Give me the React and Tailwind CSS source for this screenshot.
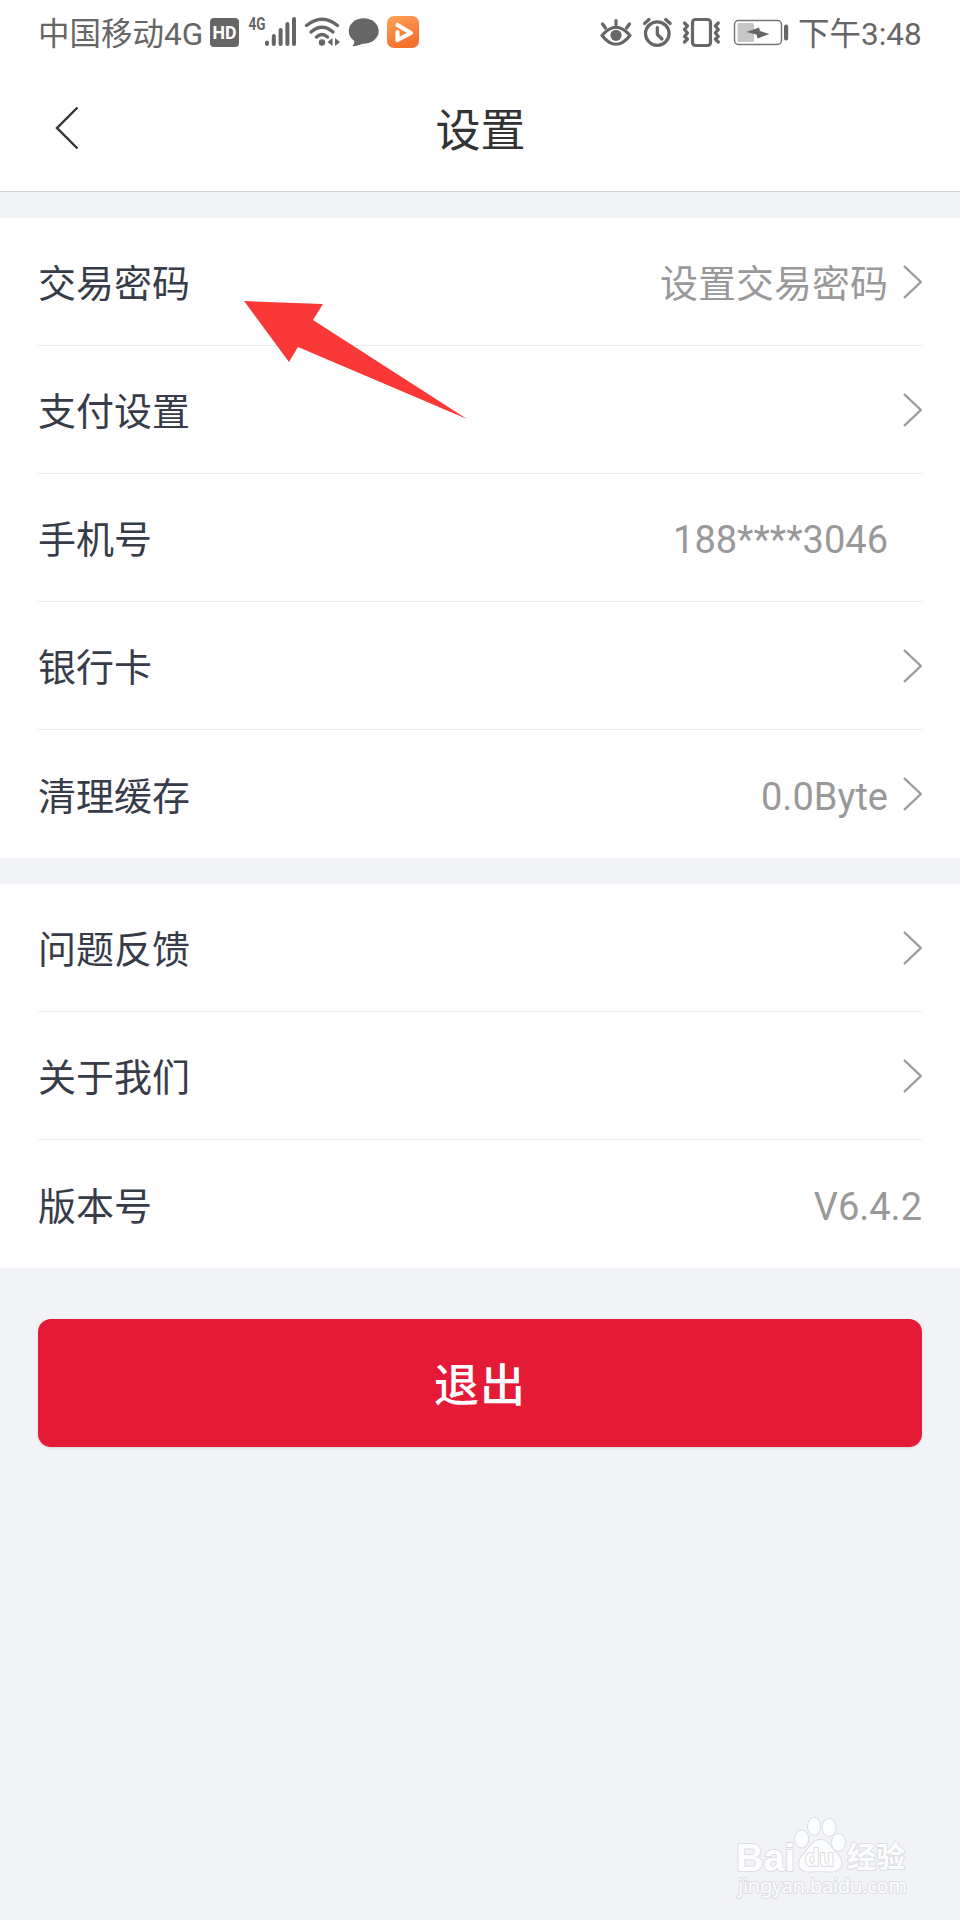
import React from "react";

const accountRows = [
  { label: "交易密码", value: "设置交易密码", arrow: true },
  { label: "支付设置", arrow: true },
  { label: "手机号", value: "188****3046", spacer: true },
  { label: "银行卡", arrow: true },
  { label: "清理缓存", value: "0.0Byte", arrow: true },
];

const aboutRows = [
  { label: "问题反馈", arrow: true },
  { label: "关于我们", arrow: true },
  { label: "版本号", value: "V6.4.2" },
];

const Chevron = () => (
  <svg className="ml-[15px] h-[34px] w-[19px]" viewBox="0 0 19 34" fill="none">
    <path d="M1 1L17.8 17L1 33" stroke="#9c9c9c" strokeWidth="2.4" />
  </svg>
);

const StatusLeft = () => (
  <div className="flex items-center">
    <span className="w-[167px] whitespace-nowrap pt-[3px] text-[31.5px] leading-[40px]">
      中国移动4G
    </span>
    <svg className="h-[66px] w-[220px]" viewBox="205 0 220 66" fill="none">
      {/* HD */}
      <rect x="210" y="18" width="29" height="29" rx="4" fill="#666" />
      <text x="212.5" y="39" fontSize="18" fontWeight="700" fill="#fff" textLength="24" lengthAdjust="spacingAndGlyphs">HD</text>
      {/* signal */}
      <text x="248.5" y="30" fontSize="18" fontWeight="700" fill="#666" textLength="17" lengthAdjust="spacingAndGlyphs">4G</text>
      <path
        d="M267 42.5V44M273.8 36V44M280.6 30V44M287.4 24V44M294 19V44"
        stroke="#666"
        strokeWidth="4"
        strokeLinecap="round"
      />
      {/* wifi */}
      <g stroke="#666" strokeWidth="3.4" strokeLinecap="round">
        <path d="M306.5 25.5Q322 13 337.5 25.5" />
        <path d="M311 32Q322 22.5 333 32" />
        <path d="M316.5 37Q322 32 327.5 37" />
      </g>
      <circle cx="322" cy="42.5" r="3.2" fill="#666" />
      <path d="M327.5 42L332.5 38V46ZM340 42L335 38V46Z" fill="#666" />
      {/* message */}
      <ellipse cx="363.7" cy="31" rx="15" ry="12.7" fill="#666" />
      <path d="M354 39C355 42 354 44 352.5 46.3C358 46 362 44.5 365 42Z" fill="#666" />
      {/* video app */}
      <rect x="387" y="16" width="32" height="32" rx="7" fill="url(#videoBg)" />
      <path d="M397.5 25L411 33L397.5 40V32" stroke="#fff" strokeWidth="4.2" strokeLinejoin="round" strokeLinecap="round" />
      <defs>
        <linearGradient id="videoBg" x1="0" y1="0" x2="0.4" y2="1">
          <stop stopColor="#ffa257" />
          <stop offset="1" stopColor="#f4702c" />
        </linearGradient>
      </defs>
    </svg>
  </div>
);

const StatusRight = () => (
  <div className="flex items-center">
    <svg className="h-[66px] w-[199px]" viewBox="599 0 199 66" fill="none">
      {/* eye */}
      <g stroke="#666" strokeWidth="3.2" strokeLinecap="round" strokeLinejoin="round">
        <path d="M602 35.5Q616 19 630 35.5Q616 53 602 35.5Z" />
        <path d="M616 20.5V25M602.5 24L605.5 28M629.5 24L626.5 28" />
      </g>
      <circle cx="616" cy="35.3" r="5.6" fill="#666" />
      {/* alarm */}
      <g stroke="#666" strokeWidth="3.2" strokeLinecap="round">
        <circle cx="657.3" cy="33.6" r="11.8" />
        <path d="M657.3 27.5V34.5L662 39" strokeLinejoin="round" />
        <path d="M644.5 23.5L649 19.5M670.2 23.5L665.7 19.5" />
      </g>
      {/* vibrate */}
      <g stroke="#666" strokeWidth="3.2" strokeLinejoin="round" strokeLinecap="round">
        <rect x="692.5" y="19.5" width="18" height="26" rx="3" />
        <path d="M684.5 23L687.5 26L684.5 29.5L687.5 33L684.5 36.5L687.5 39L684.5 42" />
        <path d="M718.3 23L715.3 26L718.3 29.5L715.3 33L718.3 36.5L715.3 39L718.3 42" />
      </g>
      {/* battery */}
      <rect x="734.5" y="20.5" width="47" height="24" rx="4" stroke="#777" strokeWidth="1.5" />
      <rect x="737.5" y="23" width="16.5" height="19" rx="1.5" fill="#c6c6c6" />
      <path d="M746.5 32L759 27.5L760 31L769.5 34L757.5 38.5L756.5 34.5Z" fill="#666" />
      <rect x="784" y="24.5" width="4.2" height="16" rx="2" fill="#666" />
    </svg>
    <span className="w-[124px] whitespace-nowrap pt-[3px] text-[31.5px] leading-[40px]">
      下午3:48
    </span>
  </div>
);

const Row = ({ label, value, arrow, spacer, last }) => (
  <div
    className={`flex h-[128px] items-center justify-between ${
      last ? "" : "border-b border-[#ececec]"
    }`}
  >
    <span className="pt-[5px] text-[38px] leading-[48px] text-[#373c48]">{label}</span>
    <div className="flex items-center">
      {value && <span className="pt-[5px] text-[38px] leading-[48px] text-[#999]">{value}</span>}
      {arrow && <Chevron />}
      {spacer && <span className="w-[34px]" />}
    </div>
  </div>
);

const Group = ({ rows }) => (
  <div className="bg-white px-[38px]">
    {rows.map((row, i) => (
      <Row key={row.label} {...row} last={i === rows.length - 1} />
    ))}
  </div>
);

const Watermark = () => (
  <svg className="absolute left-[730px] top-[1810px] h-[94px] w-[190px]" viewBox="730 1810 190 94">
    <g fill="#fcfdfe" stroke="#dcdde0" strokeWidth="2" strokeLinejoin="round" paintOrder="stroke">
      <ellipse cx="801.7" cy="1839" rx="6.5" ry="8.5" />
      <ellipse cx="814" cy="1826.5" rx="6" ry="8.5" />
      <ellipse cx="829" cy="1827.5" rx="6.5" ry="8.5" />
      <ellipse cx="838.5" cy="1842.5" rx="6.5" ry="8.5" />
      <path d="M820 1840C812 1840 809 1849 803 1855C796 1863 799 1872 809 1871.5C815 1871 824 1871 830 1871.5C842 1872 845 1862 837 1854C831 1848 828 1840 820 1840Z" />
      <g className="font-['Liberation_Sans']" fontWeight="700">
        <text x="736" y="1871" fontSize="38" textLength="59" lengthAdjust="spacingAndGlyphs">Bai</text>
        <text x="805" y="1866" fontSize="23" textLength="29" lengthAdjust="spacingAndGlyphs">du</text>
      </g>
      <text x="847" y="1868" fontSize="29" fontWeight="700" textLength="58">经验</text>
      <text className="font-['Noto_Sans']" x="738" y="1893" fontSize="20" textLength="169">jingyan.baidu.com</text>
    </g>
  </svg>
);

export default function App() {
  return (
    <div className="relative h-[1920px] w-[960px] overflow-hidden bg-[#f2f3f7] font-[Roboto,'Noto_Sans_CJK_SC',sans-serif]">
      <header className="h-[192px] border-b border-[#d3d3d5] bg-white">
        <div className="flex h-[66px] items-center justify-between pl-[38px] pr-[38px] text-[#666]">
          <StatusLeft />
          <StatusRight />
        </div>
        <div className="grid h-[124px] grid-cols-3 items-center">
          <svg className="ml-[54px] h-[44px] w-[26px]" viewBox="0 0 26 44" fill="none">
            <path d="M23.5 1.5L3 22L23.5 42.5" stroke="#333" strokeWidth="2.4" />
          </svg>
          <h1 className="pl-px pt-[7px] text-center text-[45px] leading-[60px] text-[#333]">设置</h1>
        </div>
      </header>

      <main className="flex flex-col gap-[26px] pt-[26px]">
        <Group rows={accountRows} />
        <Group rows={aboutRows} />
        <button
          type="button"
          className="mx-[38px] mt-[25px] h-[128px] rounded-[13px] bg-[#e41a37] pt-[7px] text-[45px] font-medium tracking-[1px] text-white shadow-sm"
        >
          退出
        </button>
      </main>

      <svg className="absolute left-[244px] top-[300px] h-[121px] w-[224px]" viewBox="244 300 224 121">
        <path d="M244 301L323 304L313 320L467 419L298 347L289 362Z" fill="#fb3838" />
      </svg>
      <Watermark />
    </div>
  );
}
